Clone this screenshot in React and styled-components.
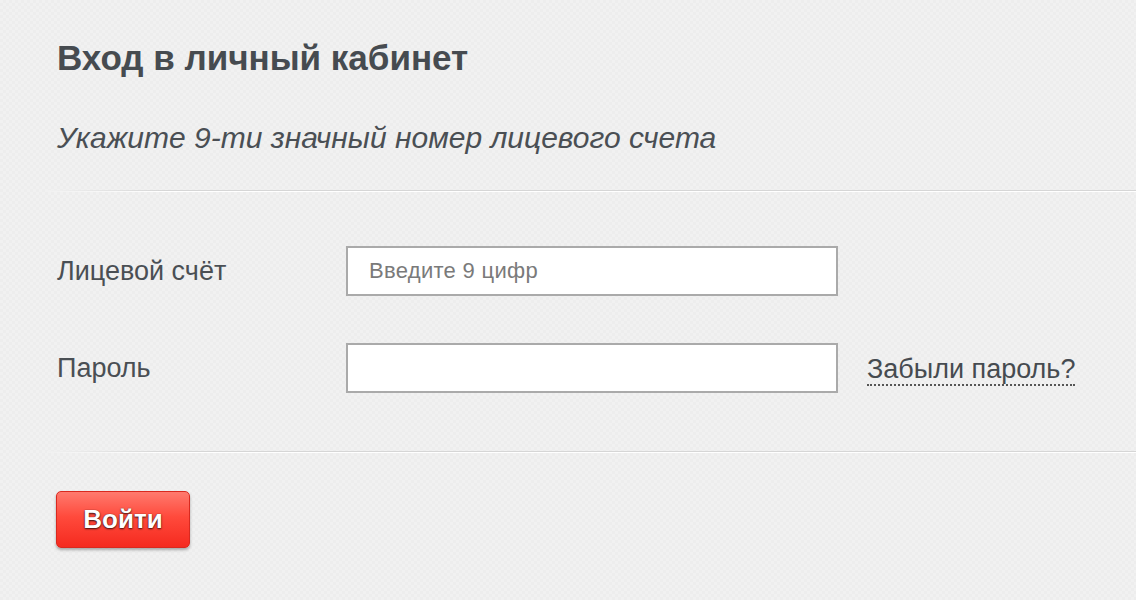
import React from 'react';
import styled, { createGlobalStyle } from 'styled-components';

const GlobalStyle = createGlobalStyle`
  html, body {
    margin: 0;
    padding: 0;
  }
  body {
    width: 1136px;
    height: 600px;
    overflow: hidden;
    font-family: "Liberation Sans", Arial, sans-serif;
    color: #464b50;
    background-color: #f1f1f1;
    background-image:
      linear-gradient(45deg, #ededed 25%, transparent 25%, transparent 75%, #ededed 75%),
      linear-gradient(45deg, #ededed 25%, transparent 25%, transparent 75%, #ededed 75%);
    background-size: 6px 6px;
    background-position: 0 0, 3px 3px;
  }
`;

const Page = styled.div`
  padding: 38px 0 0 57px;
`;

const Title = styled.h1`
  margin: 0;
  font-size: 35px;
  line-height: 40px;
  font-weight: bold;
  color: #464b50;
`;

const Subtitle = styled.p`
  margin: 44px 0 0;
  font-size: 30px;
  line-height: 32px;
  font-style: italic;
  color: #4a4f54;
`;

const Divider = styled.div`
  height: 2px;
  margin: ${(p) => p.$top}px 0 0 -10px;
  background:
    linear-gradient(to right, rgba(241, 241, 241, 1) 0, rgba(241, 241, 241, 0) 120px),
    linear-gradient(to bottom, #d6d6d6 0, #d6d6d6 1px, #ffffff 1px, #ffffff 2px);
`;

const Form = styled.div`
  display: flex;
  flex-direction: column;
  gap: 47px;
  margin-top: 54px;
`;

const Row = styled.div`
  display: flex;
  align-items: center;
`;

const Label = styled.label`
  width: 289px;
  font-size: 27px;
  color: #4a4f54;
`;

const Input = styled.input`
  box-sizing: border-box;
  width: 492px;
  height: 50px;
  padding: 0 21px;
  border: 2px solid #aaaaaa;
  background: #fff;
  font-family: "Liberation Sans", Arial, sans-serif;
  font-size: 22px;
  letter-spacing: 0.3px;
  color: #333;
  outline: none;

  &::placeholder {
    color: #7a7a7a;
  }
`;

const Forgot = styled.a`
  margin-left: 29px;
  font-size: 27px;
  color: #464b50;
  text-decoration: none;
  border-bottom: 2px dotted #555;
  line-height: 30px;
  padding-top: 4px;
`;

const Button = styled.button`
  margin: 38px 0 0 -1px;
  width: 134px;
  height: 57px;
  border: 1px solid #d9291f;
  border-radius: 5px;
  background: linear-gradient(to bottom, #ff7a6e 0%, #ff4a3c 45%, #f52a1f 100%);
  box-shadow: 0 2px 3px rgba(0, 0, 0, 0.3);
  font-family: "Liberation Sans", Arial, sans-serif;
  font-size: 26px;
  font-weight: bold;
  color: #fff;
  text-shadow: 0 1px 2px rgba(0, 0, 0, 0.75), 0 0 1px rgba(0, 0, 0, 0.6);
  cursor: pointer;
`;

export default function App() {
  return (
    <>
      <GlobalStyle />
      <Page>
        <Title>Вход в личный кабинет</Title>
        <Subtitle>Укажите 9-ти значный номер лицевого счета</Subtitle>
        <Divider $top={36} />
        <Form>
          <Row>
            <Label>Лицевой счёт</Label>
            <Input type="text" placeholder="Введите 9 цифр" />
          </Row>
          <Row>
            <Label>Пароль</Label>
            <Input type="password" />
            <Forgot href="#">Забыли пароль?</Forgot>
          </Row>
        </Form>
        <Divider $top={58} />
        <Button type="button">Войти</Button>
      </Page>
    </>
  );
}
